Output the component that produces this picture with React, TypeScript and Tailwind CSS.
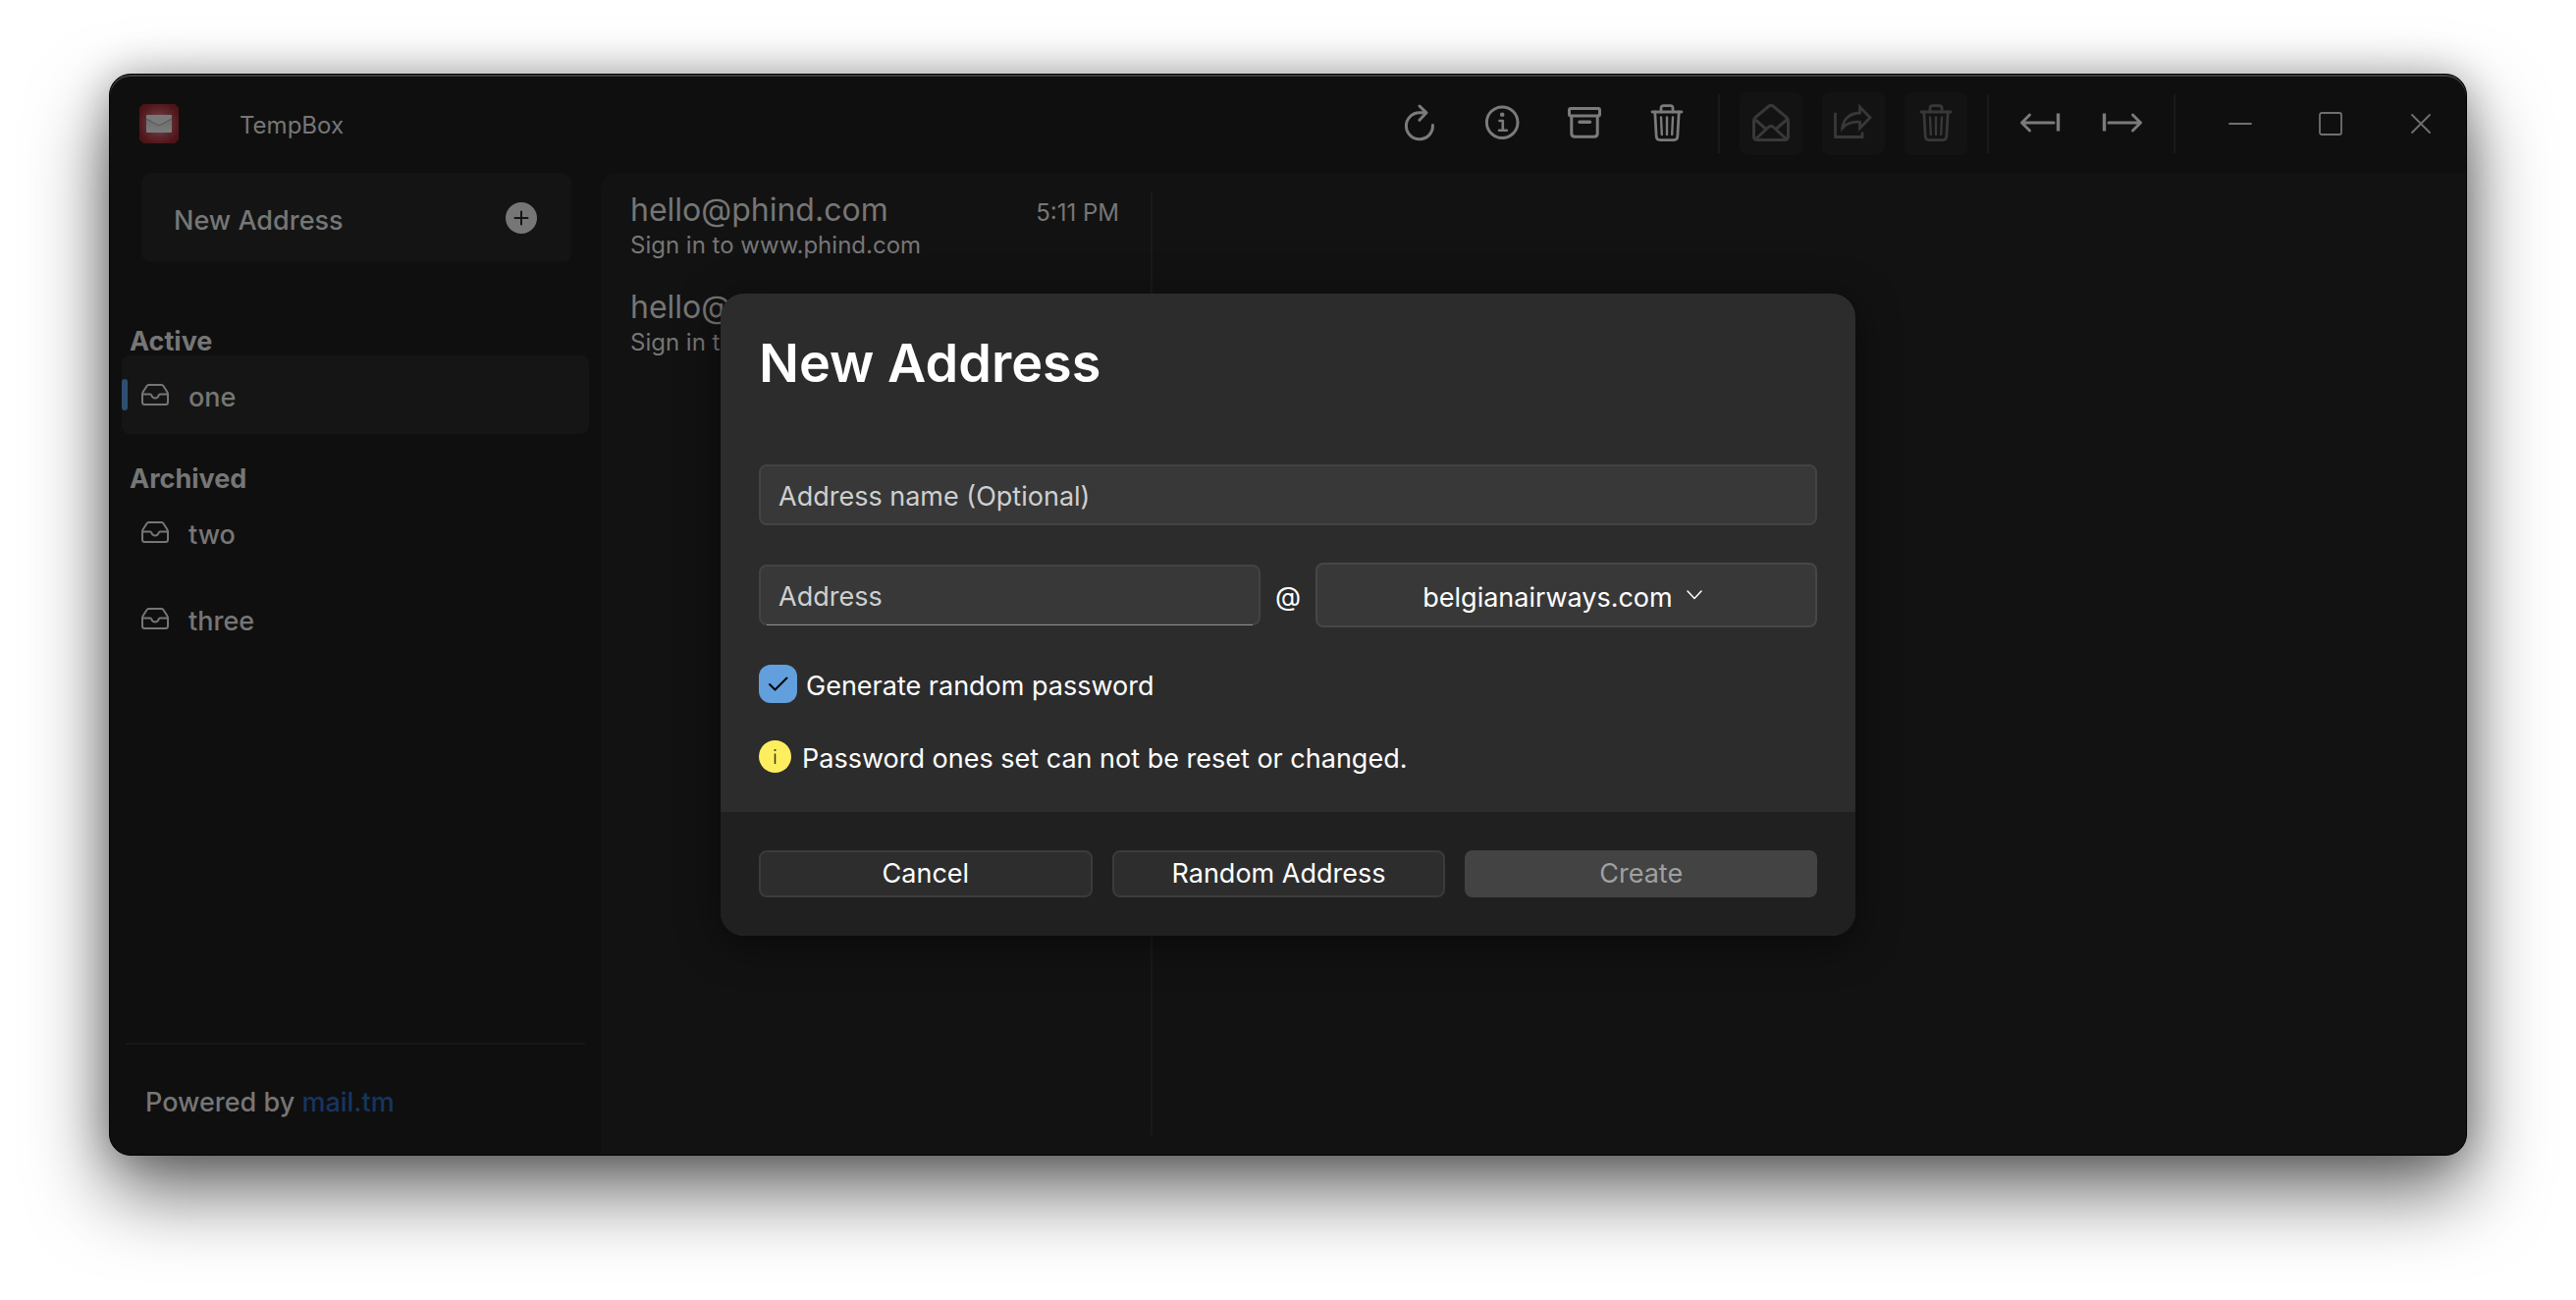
import React from 'react';

type IconProps = { children: React.ReactNode };

const stroke = {
  fill: 'none',
  stroke: 'currentColor',
  strokeLinecap: 'round' as const,
  strokeLinejoin: 'round' as const,
};

function AppLogo() {
  return (
    <svg className="size-10 shrink-0" viewBox="0 0 40 40" role="img" aria-label="TempBox logo">
      <defs>
        <radialGradient id="glow" cx="0.5" cy="0.5" r="0.55">
          <stop offset="0" stopColor="#806064" />
          <stop offset="0.55" stopColor="#5f2c31" />
          <stop offset="1" stopColor="#4f1418" />
        </radialGradient>
        <linearGradient id="paper" x1="0" y1="0" x2="0" y2="1">
          <stop offset="0" stopColor="#666666" />
          <stop offset="1" stopColor="#7c7c7c" />
        </linearGradient>
      </defs>
      <path d="M4 0H36L40 4V36L36 40H4L0 36V4Z" fill="url(#glow)" />
      <rect x="7" y="11" width="26" height="18" rx="1" fill="url(#paper)" />
      <path d="M7 14.5L18.500 20.800Q20 21.500 21.500 20.800L33 14.500V12Q33 11 32 11H8Q7 11 7 12Z" fill="#787878" />
      <path d="M7 15L18.500 21.300Q20 22 21.500 21.300L33 15" fill="none" stroke="#555555" strokeWidth="1" />
    </svg>
  );
}

function ToolIcon({ children }: IconProps) {
  return (
    <svg className="size-10" viewBox="0 0 40 40" {...stroke} strokeWidth="3">
      {children}
    </svg>
  );
}

function RefreshIcon() {
  return (
    <ToolIcon>
      <path d="M33.4 21.500A13.500 13.500 0 1 1 20 8.800H26" />
      <path d="M20 2L27 8.800L20 16.300" />
    </ToolIcon>
  );
}

function InfoIcon() {
  return (
    <ToolIcon>
      <circle cx="20.200" cy="18.700" r="15.800" />
      <path d="M17.500 17H20.800V26.500M17 26.800H24.800" strokeWidth="2.600" />
      <circle cx="20.200" cy="10.800" r="2.300" fill="currentColor" stroke="none" />
    </ToolIcon>
  );
}

function ArchiveIcon() {
  return (
    <ToolIcon>
      <rect x="4.500" y="4.500" width="31" height="7.500" rx="1.500" />
      <path d="M6.800 12V30Q6.800 33.300 10.300 33.300H29.700Q33.200 33.300 33.200 30V12" />
      <path d="M15 18.200H25.500" strokeWidth="3.400" />
    </ToolIcon>
  );
}

function TrashIcon() {
  return (
    <ToolIcon>
      <g strokeWidth="2.800">
        <path d="M5 8H35" />
        <path d="M14 8V4Q14 1.600 16.500 1.600H23.500Q26 1.600 26 4V8" />
        <path d="M7.800 8L9.200 33Q9.400 36.600 13 36.600H27Q30.600 36.600 30.800 33L32.200 8" />
        <path d="M14 13.500L14.800 31M20 13.500V31M26 13.500L25.200 31" strokeWidth="2.400" />
      </g>
    </ToolIcon>
  );
}

function EnvelopeOpenIcon() {
  return (
    <ToolIcon>
      <path d="M2.500 17Q2.500 15 4 13.700L18 2Q20 0.500 22 2L36 13.700Q37.500 15 37.500 17V33Q37.500 36.500 34 36.500H6Q2.500 36.500 2.500 33Z" />
      <path d="M3.500 15.500L14.500 25M36.500 15.500L25.500 25" />
      <path d="M4.500 35.500L17.500 23.500Q20 21.300 22.500 23.500L35.500 35.500" />
    </ToolIcon>
  );
}

function ShareIcon() {
  return (
    <svg
      className="size-10"
      viewBox="0 0 40 40"
      fill="none"
      stroke="currentColor"
      strokeWidth="2.800"
      strokeLinejoin="miter"
    >
      <path d="M1.500 8.700V33.500H29V28.500" />
      <path d="M26.500 3L37 13.700L26.500 24.500V18.300C19 17.800 13 19.500 8.700 24.500C9.500 15.500 16 9.300 26.500 9Z" />
    </svg>
  );
}

function ArrowFromRight() {
  return (
    <svg className="h-6 w-[42px]" viewBox="0 0 42 24" {...stroke} strokeWidth="3">
      <path d="M10.500 3L2.500 11L10.500 19M3 11H35" />
      <path d="M39.500 1.500V19.500" strokeLinecap="butt" strokeWidth="3.400" />
    </svg>
  );
}

function ArrowFromLeft() {
  return (
    <svg className="h-6 w-[42px]" viewBox="0 0 42 24" {...stroke} strokeWidth="3">
      <path d="M31.500 3L39.500 11L31.500 19M39 11H7" />
      <path d="M2.500 1.500V19.500" strokeLinecap="butt" strokeWidth="3.400" />
    </svg>
  );
}

function TrayIcon() {
  return (
    <svg className="h-[22px] w-7 shrink-0" viewBox="0 0 28 22" {...stroke} strokeWidth="2">
      <path d="M7.500 1H20.500Q21.500 1 22.200 1.800L26.200 8Q27 9.200 27 10.500V18.500Q27 21 24.500 21H3.500Q1 21 1 18.500V10.500Q1 9.200 1.800 8L5.800 1.800Q6.500 1 7.500 1Z" />
      <path d="M1.500 10.500H9Q10 10.500 10.300 11.500Q11.200 14.500 14 14.500Q16.800 14.500 17.700 11.500Q18 10.500 19 10.500H26.500" />
    </svg>
  );
}

function ToolButton({
  label,
  disabled,
  children,
}: {
  label: string;
  disabled?: boolean;
  children: React.ReactNode;
}) {
  return (
    <button
      type="button"
      aria-label={label}
      disabled={disabled}
      className="flex size-16 items-center justify-center rounded-lg text-[#7b7b7b] disabled:bg-[#131313] disabled:text-[#383838]"
    >
      {children}
    </button>
  );
}

function WindowButton({ label, children }: { label: string; children: React.ReactNode }) {
  return (
    <button
      type="button"
      aria-label={label}
      className="flex h-full w-[92px] items-center justify-center text-[#707070]"
    >
      <svg className="size-6" viewBox="0 0 24 24" {...stroke} strokeWidth="1.800">
        {children}
      </svg>
    </button>
  );
}

function Separator() {
  return <div className="h-[60px] w-0.5 bg-[#191919]" />;
}

function TitleBar() {
  return (
    <header className="flex h-[100px] shrink-0 items-center pl-[30px]">
      <AppLogo />
      <h1 className="pt-1 pl-[62px] text-[24px] leading-8">TempBox</h1>
      <div className="ml-auto flex h-full items-center gap-5">
        <ToolButton label="Refresh"><RefreshIcon /></ToolButton>
        <ToolButton label="Address info"><InfoIcon /></ToolButton>
        <ToolButton label="Archive address"><ArchiveIcon /></ToolButton>
        <ToolButton label="Delete address"><TrashIcon /></ToolButton>
        <Separator />
        <ToolButton label="Mark as read" disabled><EnvelopeOpenIcon /></ToolButton>
        <ToolButton label="Share message" disabled><ShareIcon /></ToolButton>
        <ToolButton label="Delete message" disabled><TrashIcon /></ToolButton>
        <Separator />
        <ToolButton label="Previous"><ArrowFromRight /></ToolButton>
        <ToolButton label="Next"><ArrowFromLeft /></ToolButton>
        <Separator />
        <div className="flex h-full">
          <WindowButton label="Minimize"><path d="M1 12H23" /></WindowButton>
          <WindowButton label="Maximize"><rect x="1" y="1" width="22" height="22" rx="2" /></WindowButton>
          <WindowButton label="Close"><path d="M3 3L21 21M21 3L3 21" /></WindowButton>
        </div>
      </div>
    </header>
  );
}

function AddressGroup({ title, names, selected }: { title: string; names: string[]; selected?: string }) {
  return (
    <section>
      <h2 className="pl-2 text-[27px] leading-7 font-bold">{title}</h2>
      <ul className="flex flex-col gap-2">
        {names.map((name) => (
          <li key={name}>
            <button
              type="button"
              aria-pressed={name === selected}
              className="group relative flex h-20 w-full items-center gap-5 rounded-lg pl-5 aria-pressed:bg-[#151515]"
            >
              <span className="absolute left-0 hidden h-8 w-1.5 rounded-full bg-[#2f4f70] group-aria-pressed:block" />
              <TrayIcon />
              <span className="pt-1.5 text-[27px] leading-8 font-medium">{name}</span>
            </button>
          </li>
        ))}
      </ul>
    </section>
  );
}

function Sidebar() {
  return (
    <aside className="flex w-[500px] shrink-0 flex-col">
      <button
        type="button"
        className="mr-[30px] ml-8 flex h-[91px] items-center justify-between rounded-lg border border-[#121212] bg-[#141414] pr-[34px] pl-8"
      >
        <span className="pt-1.5 text-[27px] leading-8 font-medium">New Address</span>
        <svg className="size-8" viewBox="0 0 32 32">
          <circle cx="16" cy="16" r="16" fill="currentColor" />
          <path d="M16 9.500V22.500M9.500 16H22.500" stroke="#141414" strokeWidth="2" strokeLinecap="round" />
        </svg>
      </button>
      <nav className="mt-[67px] flex flex-1 flex-col gap-8 px-3">
        <AddressGroup title="Active" names={['one']} selected="one" />
        <AddressGroup title="Archived" names={['two', 'three']} />
      </nav>
      <footer className="mx-4 flex h-[114px] items-center border-t-2 border-[#171717] pl-5">
        <p className="pt-1.5 text-[27px] leading-8 font-medium">
          Powered by{' '}
          <a href="https://mail.tm" className="text-[#16365f]">mail.tm</a>
        </p>
      </footer>
    </aside>
  );
}

function MessageList() {
  const messages = [
    { from: 'hello@phind.com', subject: 'Sign in to www.phind.com', time: '5:11 PM' },
    { from: 'hello@phind.com', subject: 'Sign in to www.phind.com', time: '5:11 PM' },
  ];
  return (
    <ul className="flex w-[560px] shrink-0 flex-col gap-7 pt-[18px] pr-8 pl-[30px]">
      {messages.map((message, index) => (
        <li key={index}>
          <div className="flex items-baseline justify-between">
            <span className="text-[32px] leading-10">{message.from}</span>
            <time className="text-[24px]">{message.time}</time>
          </div>
          <p className="text-[24px] leading-[30px]">{message.subject}</p>
        </li>
      ))}
    </ul>
  );
}

const field =
  'w-full rounded-lg border-2 border-[#434343] bg-[#383838] text-[27px] placeholder:text-[#cfcfcf] outline-none';

function NewAddressDialog() {
  return (
    <form
      role="dialog"
      aria-labelledby="dialog-title"
      className="w-full max-w-[1156px] overflow-hidden rounded-3xl bg-[#2c2c2c] text-[27px] leading-8 text-white shadow-[0_8px_40px_rgba(0,0,0,0.5)]"
    >
      <div className="flex flex-col gap-[38px] px-[39px] pt-[39px] pb-10">
        <h2 id="dialog-title" className="mb-[33px] text-[54px] leading-[64px] font-semibold">
          New Address
        </h2>
        <input
          type="text"
          aria-label="Address name (Optional)"
          placeholder="Address name (Optional)"
          className={`${field} h-[62px] px-[18px] pt-0.5`}
        />
        <div className="flex items-center">
          <div className="relative flex-1 after:absolute after:inset-x-2 after:bottom-0 after:h-px after:bg-[#8f8f8f]">
            <input
              type="text"
              aria-label="Address"
              placeholder="Address"
              className={`${field} block h-[62px] px-[18px] pt-0.5`}
            />
          </div>
          <span className="w-14 pt-1 text-center">@</span>
          <div className="relative flex-1">
            <select
              aria-label="Domain"
              className={`${field} block h-[66px] appearance-none border-[#474747] pt-1.5 pr-[38px] text-center`}
            >
              <option>belgianairways.com</option>
            </select>
            <span className="pointer-events-none absolute inset-0 flex items-center justify-center pl-[260px]">
              <svg className="h-2.5 w-4" viewBox="0 0 16 10" {...stroke} strokeWidth="1.500">
                <path d="M1 1L8 8.500L15 1" />
              </svg>
            </span>
          </div>
        </div>
        <label className="flex h-[39px] items-center gap-[9px]">
          <span className="relative flex size-[39px]">
            <input
              type="checkbox"
              defaultChecked
              className="peer size-full appearance-none rounded-xl bg-[#3a3a3a] checked:bg-[#629fdd]"
            />
            <svg
              className="pointer-events-none absolute inset-0 hidden text-black peer-checked:block"
              viewBox="0 0 39 39"
              {...stroke}
              strokeWidth="2"
            >
              <path d="M11 20L16.500 25.500L28.500 13.500" />
            </svg>
          </span>
          <span className="pt-1">Generate random password</span>
        </label>
        <div className="flex h-[33px] items-center gap-[11px]">
          <svg className="size-[33px] shrink-0" viewBox="0 0 33 33">
            <circle cx="16.500" cy="16.500" r="16.500" fill="#fcee5e" />
            <path d="M16.500 13.500V24" stroke="#3a3716" strokeWidth="1.500" />
            <circle cx="16.500" cy="10" r="1.100" fill="#3a3716" />
          </svg>
          <p className="pt-1">Password ones set can not be reset or changed.</p>
        </div>
      </div>
      <div className="grid grid-cols-[340fr_340fr_359fr] gap-5 bg-[#202020] p-[39px] leading-7">
        <button type="button" className="h-12 rounded-lg border-2 border-[#3b3b3b] bg-[#2d2d2d]">
          Cancel
        </button>
        <button type="button" className="h-12 rounded-lg border-2 border-[#3b3b3b] bg-[#2d2d2d]">
          Random Address
        </button>
        <button type="submit" disabled className="h-12 rounded-lg bg-[#434343] text-[#a0a0a0]">
          Create
        </button>
      </div>
    </form>
  );
}

export default function App() {
  return (
    <div className="flex min-h-screen flex-col bg-white px-[111px] pt-[75px] pb-[147px] font-['Inter',sans-serif]">
      <div className="relative flex flex-1 flex-col overflow-hidden rounded-[22px] border border-black bg-[#0f0f0f] text-[#767676] shadow-[0_36px_80px_rgba(0,0,0,0.6),0_0_40px_rgba(0,0,0,0.25)]">
        <TitleBar />
        <div className="flex flex-1">
          <Sidebar />
          <main className="flex flex-1 rounded-tl-2xl bg-[#121212]">
            <MessageList />
            <div className="my-5 w-0.5 bg-[#1a1a1a]" />
          </main>
        </div>
        <div className="pointer-events-none absolute inset-0 rounded-[21px] shadow-[inset_0_2px_0_#3a3f3d]" />
        <div className="absolute inset-0 flex items-center justify-center">
          <NewAddressDialog />
        </div>
      </div>
    </div>
  );
}
